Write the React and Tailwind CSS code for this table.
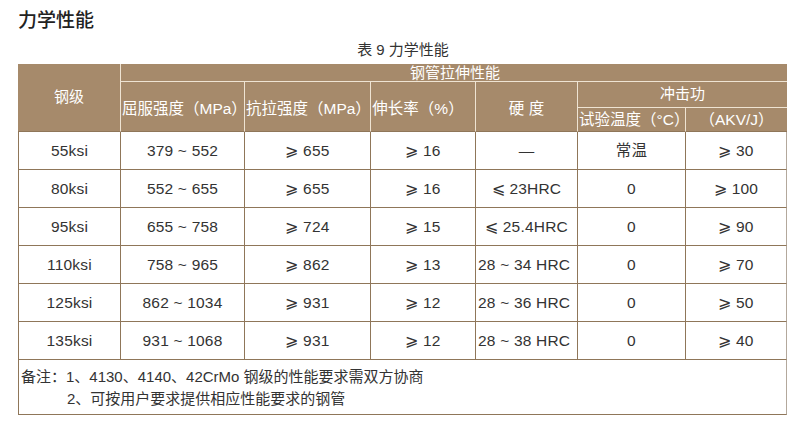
const rows = [
  ['55ksi', '379 ~ 552', '⩾ 655', '⩾ 16', '—', '常温', '⩾ 30'],
  ['80ksi', '552 ~ 655', '⩾ 655', '⩾ 16', '⩽ 23HRC', '0', '⩾ 100'],
  ['95ksi', '655 ~ 758', '⩾ 724', '⩾ 15', '⩽ 25.4HRC', '0', '⩾ 90'],
  ['110ksi', '758 ~ 965', '⩾ 862', '⩾ 13', '28 ~ 34 HRC', '0', '⩾ 70'],
  ['125ksi', '862 ~ 1034', '⩾ 931', '⩾ 12', '28 ~ 36 HRC', '0', '⩾ 50'],
  ['135ksi', '931 ~ 1068', '⩾ 931', '⩾ 12', '28 ~ 38 HRC', '0', '⩾ 40'],
]

const widths = ['w-[103px]', 'w-[124px]', 'w-[126px]', 'w-[105px]', 'w-[102px]', 'w-[108px]', 'w-[101px]']

export default function App() {
  return (
    <div className="w-[804px] h-[428px] bg-white font-['Liberation_Sans','Noto_Sans_CJK_SC',sans-serif] text-[#333]">
      <div className="pl-[18px] pt-[8px] text-[19px] font-medium text-[#222] leading-[26px]">力学性能</div>
      <div className="mt-[6px] text-center text-[15px] leading-[20px] text-[#333] pl-[2px]">表 9 力学性能</div>

      <table className="ml-[18px] mt-[4px] w-[769px] table-fixed border-separate border-spacing-0 text-[15px]">
        <colgroup>
          {widths.map((w, i) => (
            <col key={i} className={w} />
          ))}
        </colgroup>
        <thead className="bg-[#a68a6b] text-white font-normal">
          <tr className="h-[18px]">
            <th rowSpan={3} className="border-r border-b border-r-[#efe4d3] border-b-[#8f7659] font-normal">钢级</th>
            <th colSpan={6} className="border-b border-[#efe4d3] font-normal leading-[17px] pl-[2px]">钢管拉伸性能</th>
          </tr>
          <tr className="h-[26px] text-[15.5px]">
            <th rowSpan={2} className="border-r border-r-[#efe4d3] border-b border-b-[#8f7659] font-normal text-left pl-[1px] pt-[3px] whitespace-nowrap">屈服强度（MPa）</th>
            <th rowSpan={2} className="border-r border-r-[#efe4d3] border-b border-b-[#8f7659] font-normal text-left pl-[1px] pt-[3px] whitespace-nowrap">抗拉强度（MPa）</th>
            <th rowSpan={2} className="border-r border-r-[#efe4d3] border-b border-b-[#8f7659] font-normal pt-[3px] pr-[10px] whitespace-nowrap">伸长率（%）</th>
            <th rowSpan={2} className="border-r border-r-[#efe4d3] border-b border-b-[#8f7659] font-normal pt-[3px]">硬 度</th>
            <th colSpan={2} className="border-b border-[#efe4d3] font-normal text-[15px]">冲击功</th>
          </tr>
          <tr className="h-[24px] text-[15.5px]">
            <th className="border-r border-r-[#efe4d3] border-b border-b-[#8f7659] font-normal text-left pl-[1px] whitespace-nowrap">试验温度（°C）</th>
            <th className="border-b border-b-[#8f7659] font-normal whitespace-nowrap">（AKV/J）</th>
          </tr>
        </thead>
        <tbody>
          {rows.map((r, i) => (
            <tr key={i} className="h-[38px]">
              {r.map((c, j) => (
                <td
                  key={j}
                  className={
                    'border-b border-r border-[#8f7659] whitespace-nowrap text-[15.5px] tracking-[0.2px] ' +
                    (j === 0 ? 'border-l ' : '') +
                    (j === 6 ? 'border-r-[#b3a89c] ' : '') +
                    (j === 4 && i >= 3 ? 'text-left pl-[2px]' : 'text-center')
                  }
                >
                  {c}
                </td>
              ))}
            </tr>
          ))}
          <tr>
            <td colSpan={7} className="h-[55px] border-l border-b border-r border-[#8f7659] border-r-[#b3a89c] text-[15px] leading-[22px] pl-[2px] pt-[6px] align-top">
              <div>备注：1、4130、4140、42CrMo 钢级的性能要求需双方协商</div>
              <div className="pl-[46px]">2、可按用户要求提供相应性能要求的钢管</div>
            </td>
          </tr>
        </tbody>
      </table>
    </div>
  )
}
